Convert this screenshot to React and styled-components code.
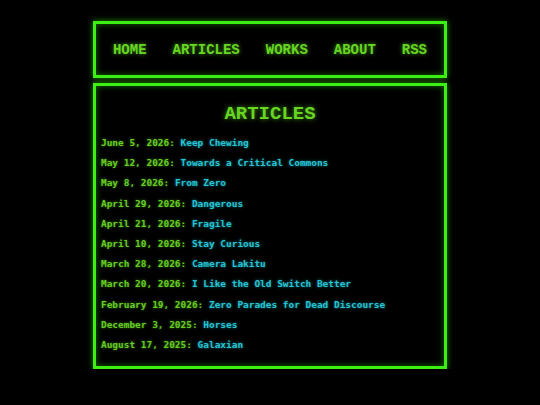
import React from "react";
import styled, { createGlobalStyle } from "styled-components";

const GlobalStyle = createGlobalStyle`
  html, body {
    margin: 0;
    padding: 0;
    background: #000;
  }
  body {
    font-family: "DejaVu Sans Mono", "Liberation Mono", monospace;
  }
`;

const Page = styled.div`
  width: 354px;
  margin: 0 auto;
  padding-top: 21px;
  display: flex;
  flex-direction: column;
  gap: 5px;
`;

const Panel = styled.div`
  box-sizing: border-box;
  border: 3px solid #3cf011;
  box-shadow: 0 0 6px rgba(60, 240, 17, 0.55),
    inset 0 0 6px rgba(60, 240, 17, 0.45);
  background: #000;
`;

const Nav = styled(Panel)`
  height: 57px;
  display: flex;
  align-items: center;
  justify-content: center;
  gap: 26px;
`;

const NavLink = styled.a`
  font-family: "Liberation Mono", "DejaVu Sans Mono", monospace;
  font-weight: bold;
  font-size: 14px;
  color: #66d622;
  text-decoration: none;
  text-shadow: 0 0 4px rgba(102, 214, 34, 0.7);
`;

const Main = styled(Panel)`
  height: 286px;
  padding: 17px 5px 0 5px;
`;

const Heading = styled.h1`
  margin: 0 0 8px 0;
  text-align: center;
  font-family: "Liberation Mono", "DejaVu Sans Mono", monospace;
  font-weight: bold;
  font-size: 19px;
  line-height: 22px;
  color: #66d622;
  text-shadow: 0 0 5px rgba(102, 214, 34, 0.7);
`;

const List = styled.ul`
  list-style: none;
  margin: 0;
  padding: 0;
  display: flex;
  flex-direction: column;
`;

const Item = styled.li`
  font-size: 9.45px;
  font-weight: bold;
  line-height: 20.2px;
  white-space: nowrap;
  color: #66cc22;
  text-shadow: 0 0 3px rgba(102, 204, 34, 0.6);
`;

const Title = styled.a`
  color: #25c4d4;
  text-decoration: none;
  text-shadow: 0 0 3px rgba(37, 196, 212, 0.65);
`;

const links = ["HOME", "ARTICLES", "WORKS", "ABOUT", "RSS"];

const articles = [
  ["June 5, 2026", "Keep Chewing"],
  ["May 12, 2026", "Towards a Critical Commons"],
  ["May 8, 2026", "From Zero"],
  ["April 29, 2026", "Dangerous"],
  ["April 21, 2026", "Fragile"],
  ["April 10, 2026", "Stay Curious"],
  ["March 28, 2026", "Camera Lakitu"],
  ["March 20, 2026", "I Like the Old Switch Better"],
  ["February 19, 2026", "Zero Parades for Dead Discourse"],
  ["December 3, 2025", "Horses"],
  ["August 17, 2025", "Galaxian"],
];

const App = () => {
  return (
    <>
      <GlobalStyle />
      <Page>
        <Nav>
          {links.map((l) => (
            <NavLink key={l} href="#">
              {l}
            </NavLink>
          ))}
        </Nav>
        <Main>
          <Heading>ARTICLES</Heading>
          <List>
            {articles.map(([date, title]) => (
              <Item key={title}>
                {date}: <Title href="#">{title}</Title>
              </Item>
            ))}
          </List>
        </Main>
      </Page>
    </>
  );
};

export default App;
